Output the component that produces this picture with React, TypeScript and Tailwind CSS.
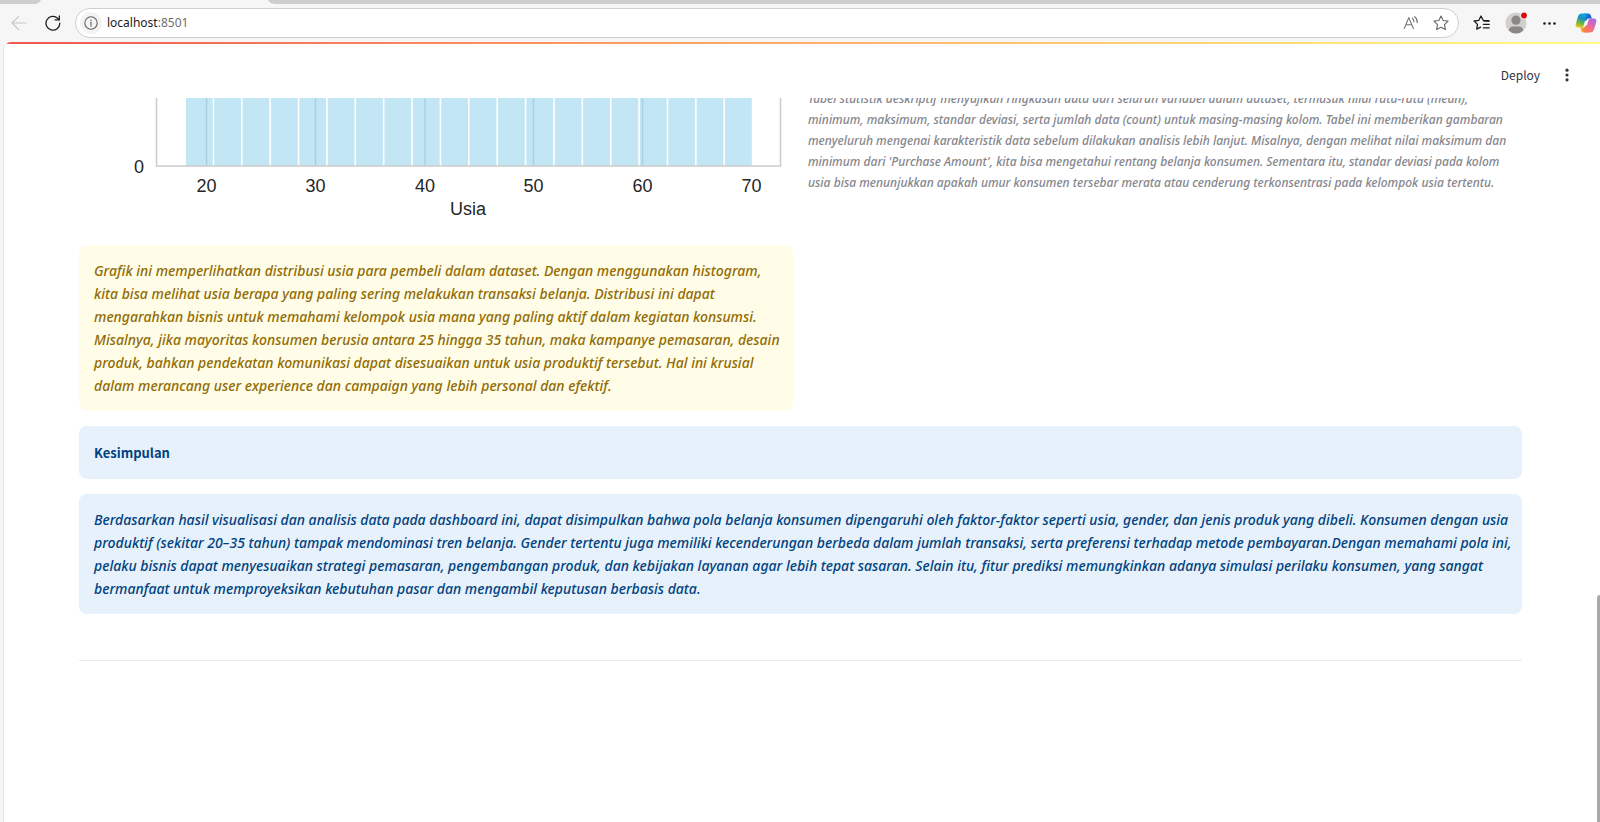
import React from "react";

const BIN_WIDTH = 28.38;
const BIN_COUNT = 20;
const BARS_LEFT = 106;

const ticks = [
  { label: "20", x: 127.5, grid: true },
  { label: "30", x: 236.5, grid: true },
  { label: "40", x: 346, grid: true },
  { label: "50", x: 454.5, grid: true },
  { label: "60", x: 563.5, grid: true },
  { label: "70", x: 672.5, grid: false },
];

function AgeHistogram() {
  return (
    <svg
      viewBox="0 0 714 147"
      className="block w-full"
      role="img"
      aria-label="Distribusi usia"
      fontFamily='"Liberation Sans", Arial, sans-serif'
      fontSize="18"
      fill="#262626"
    >
      {Array.from({ length: BIN_COUNT }, (_, i) => (
        <rect
          key={i}
          x={BARS_LEFT + i * BIN_WIDTH + (i === 0 ? 1 : 0.8)}
          y="0"
          width={BIN_WIDTH - 1.6}
          height="68"
          fill="#c3e6f4"
        />
      ))}
      {ticks.map((t) => (
        <g key={t.label}>
          {t.grid && <path d={`M${t.x} 0V68`} stroke="#a9cedd" strokeWidth="1.4" />}
          <text x={t.x} y="94" textAnchor="middle">
            {t.label}
          </text>
        </g>
      ))}
      <path d="M77.5 0V68H701.5V0" fill="none" stroke="#cccccc" strokeWidth="1.6" />
      <text x="60" y="75" textAnchor="middle">
        0
      </text>
      <text x="389" y="117" textAnchor="middle">
        Usia
      </text>
    </svg>
  );
}

function BackIcon() {
  return (
    <svg viewBox="0 0 16 16" className="size-4" fill="none" stroke="#c6c6c6" strokeWidth="1.1" strokeLinecap="round" strokeLinejoin="round">
      <path d="M15 8H1.2M7.6 1.4 1 8l6.6 6.6" />
    </svg>
  );
}

function ReloadIcon() {
  return (
    <svg viewBox="0 0 16 16" className="size-4" fill="none" stroke="#1f1f1f" strokeWidth="1.3" strokeLinecap="round" strokeLinejoin="round">
      <path d="M14.8 8.2A6.9 6.9 0 1 1 12.6 3.2L14.2 4.8" />
      <path d="M14.3 0.9V4.9H10.2" />
    </svg>
  );
}

function InfoIcon() {
  return (
    <svg viewBox="0 0 14 14" className="size-3.5" fill="none" stroke="#636363" strokeWidth="1.1">
      <circle cx="7" cy="7" r="6.2" />
      <path d="M7 6.2v4" strokeLinecap="round" />
      <circle cx="7" cy="4.2" r="0.7" fill="#636363" stroke="none" />
    </svg>
  );
}

function ReadAloudIcon() {
  return (
    <svg viewBox="0 0 16 16" className="size-4" fill="none" stroke="#707070" strokeWidth="1.1" strokeLinecap="round" strokeLinejoin="round">
      <path d="M1.2 13.6 5.8 2.6 10.4 13.6M2.8 9.8H8.8" />
      <path d="M9.4 3.2Q10.9 4.6 10.9 6.8M11.6 1.6Q14.4 3.8 14.2 7.6" />
    </svg>
  );
}

function StarIcon() {
  return (
    <svg viewBox="0 0 16 16" className="size-4" fill="none" stroke="#6a6a6a" strokeWidth="1.1" strokeLinejoin="round">
      <path d="M8 1 10.15 5.5 15.1 6.15 11.5 9.6 12.4 14.6 8 12.2 3.6 14.6 4.5 9.6 0.9 6.15 5.85 5.5Z" />
    </svg>
  );
}

function FavoritesIcon() {
  return (
    <svg viewBox="0 0 18 16" className="h-4 w-[18px]" fill="none" stroke="#1c1c1c" strokeWidth="1.3" strokeLinecap="round" strokeLinejoin="round">
      <path d="M15.6 5.6 10.2 5.3 8 1 5.85 5.3 1.1 6 4.5 9.4 3.7 14.2 7.6 12.2" />
      <path d="M11 6H16.2M10.4 9.4H16.2M10.4 12.8H16.2" />
    </svg>
  );
}

function AvatarIcon() {
  return (
    <svg viewBox="0 0 22 22" className="size-[22px]">
      <defs>
        <clipPath id="avatar-disc">
          <circle cx="11" cy="11" r="10.5" />
        </clipPath>
      </defs>
      <circle cx="11" cy="11" r="10.5" fill="#d2d0ce" />
      <g clipPath="url(#avatar-disc)" fill="#8a8886">
        <circle cx="11" cy="8.2" r="4.6" />
        <path d="M3.5 20.5C3.5 16 6 14.4 8 14.4H14C16 14.4 18.5 16 18.5 20.5V22H3.5Z" />
      </g>
      <circle cx="19" cy="3.5" r="3.6" fill="#f5f5f5" />
      <circle cx="19" cy="3.5" r="2.9" fill="#dc0a12" />
    </svg>
  );
}

function CopilotIcon() {
  return (
    <svg viewBox="0 0 22 20" className="h-5 w-[22px]">
      <defs>
        <linearGradient id="cp-left" x1="0.6" y1="0" x2="0.3" y2="1">
          <stop offset="0" stopColor="#12a5e6" />
          <stop offset="0.35" stopColor="#1b93b8" />
          <stop offset="0.65" stopColor="#6bb545" />
          <stop offset="1" stopColor="#f5c518" />
        </linearGradient>
        <linearGradient id="cp-right" x1="0.7" y1="0" x2="0.3" y2="1">
          <stop offset="0" stopColor="#a568e8" />
          <stop offset="0.5" stopColor="#e765a8" />
          <stop offset="1" stopColor="#ff7a5c" />
        </linearGradient>
        <linearGradient id="cp-top" x1="0" y1="0" x2="1" y2="1">
          <stop offset="0" stopColor="#1c8fe8" />
          <stop offset="1" stopColor="#1746b8" />
        </linearGradient>
        <linearGradient id="cp-bottom" x1="0" y1="0" x2="1" y2="0">
          <stop offset="0" stopColor="#fbb829" />
          <stop offset="1" stopColor="#f4603e" />
        </linearGradient>
      </defs>
      <path d="M9 0.6H13.4C15 0.6 15.6 1.6 16 3L16.8 5.6H14C12.4 5.6 11.8 6.4 11.4 7.6L9 8Z" fill="url(#cp-top)" />
      <path d="M13 19.4H8.6C7 19.4 6.4 18.4 6 17L5.2 14.4H8C9.6 14.4 10.2 13.6 10.6 12.4L13 12Z" fill="url(#cp-bottom)" />
      <path d="M7 0.6H11.6C10.6 1.2 11.2 3 11 4.4L8.7 12.2C8.2 13.8 7.4 14.6 6 14.6H3C1 14.6 0.2 13 0.8 11L3 3.6C3.6 1.6 4.8 0.6 7 0.6Z" fill="url(#cp-left)" />
      <path d="M15 19.4H10.4C11.4 18.8 10.8 17 11 15.6L13.3 7.8C13.8 6.2 14.6 5.4 16 5.4H19C21 5.4 21.8 7 21.2 9L19 16.4C18.4 18.4 17.2 19.4 15 19.4Z" fill="url(#cp-right)" />
    </svg>
  );
}

function BrowserBar() {
  return (
    <div className="bg-[#f6f6f6] font-['Noto_Sans',sans-serif]">
      <div className="flex h-1 bg-[#cecece]">
        <svg viewBox="0 0 242 4" className="ml-[34px] h-1 w-[242px]">
          <path d="M0 4Q5 4 7 0H234Q236 4 242 4Z" fill="#f6f6f6" />
        </svg>
      </div>
      <div className="flex h-[38px] items-center pr-[3px] pl-[11px]">
        <button type="button" aria-label="Kembali" disabled>
          <BackIcon />
        </button>
        <button type="button" aria-label="Muat ulang" className="ml-[18px]">
          <ReloadIcon />
        </button>
        <div className="ml-3.5 flex h-[30px] min-w-0 grow items-center rounded-full border border-[#cfcfcf] bg-white pr-[9px] pl-1">
          <button type="button" aria-label="Info situs" className="grid size-[22px] place-items-center rounded-full bg-[#f3f3f3]">
            <InfoIcon />
          </button>
          <a href="http://localhost:8501" className="ml-[5px] grow text-xs text-[#1b1b1b]">
            localhost<span className="text-[#707070]">:8501</span>
          </a>
          <button type="button" aria-label="Baca dengan suara">
            <ReadAloudIcon />
          </button>
          <button type="button" aria-label="Tambahkan ke favorit" className="ml-3.5">
            <StarIcon />
          </button>
        </div>
        <div className="ml-3.5 flex items-center gap-3.5">
          <button type="button" aria-label="Favorit">
            <FavoritesIcon />
          </button>
          <button type="button" aria-label="Profil">
            <AvatarIcon />
          </button>
          <button type="button" aria-label="Menu lainnya">
            <svg viewBox="0 0 20 20" className="size-5" fill="#1c1c1c">
              <circle cx="3.5" cy="10.5" r="1.3" />
              <circle cx="8.5" cy="10.5" r="1.3" />
              <circle cx="13.5" cy="10.5" r="1.3" />
            </svg>
          </button>
          <button type="button" aria-label="Copilot">
            <CopilotIcon />
          </button>
        </div>
      </div>
    </div>
  );
}

function Alert({ tone, children }: { tone: "warning" | "info"; children: React.ReactNode }) {
  const colors = tone === "warning" ? "bg-[#fffde7] text-[#926c05]" : "bg-[#e7f1fb] text-[#004280]";
  return (
    <div role="note" className={`rounded-lg px-[15px] py-3.5 text-sm leading-[23px] font-medium italic lg:whitespace-nowrap ${colors}`}>
      {children}
    </div>
  );
}

export default function App() {
  return (
    <div className="flex min-h-screen flex-col bg-[#f6f6f6]">
      <BrowserBar />
      <div className="ml-[3px] flex grow flex-col overflow-hidden rounded-tl-lg border-l border-[#e4e4e4] bg-white font-['Noto_Sans',sans-serif]">
        <div className="h-0.5 bg-linear-to-r from-[#f05552] to-[#fffd80]" />
        <div className="flex grow">
          <div className="flex min-w-0 grow flex-col">
            <header className="flex h-[54px] items-center justify-end gap-5 pt-2 pr-[23px] font-['Noto_Sans_CJK_SC',sans-serif]">
              <button type="button" className="text-xs text-[#31333f]">
                Deploy
              </button>
              <button type="button" aria-label="Menu utama">
                <svg viewBox="0 0 14 14" className="size-3.5" fill="#31333f">
                  <circle cx="7" cy="2.2" r="1.6" />
                  <circle cx="7" cy="7" r="1.6" />
                  <circle cx="7" cy="11.8" r="1.6" />
                </svg>
              </button>
            </header>
            <main className="flex flex-col gap-[15px] overflow-hidden px-[75px]">
              <div className="grid grid-cols-2 items-start gap-[15px]">
                <div>
                  <AgeHistogram />
                  <Alert tone="warning">
                    Grafik ini memperlihatkan distribusi usia para pembeli dalam dataset. Dengan menggunakan histogram,
                    <br /> kita bisa melihat usia berapa yang paling sering melakukan transaksi belanja. Distribusi ini dapat
                    <br /> mengarahkan bisnis untuk memahami kelompok usia mana yang paling aktif dalam kegiatan konsumsi.
                    <br /> Misalnya, jika mayoritas konsumen berusia antara 25 hingga 35 tahun, maka kampanye pemasaran, desain
                    <br /> produk, bahkan pendekatan komunikasi dapat disesuaikan untuk usia produktif tersebut. Hal ini krusial
                    <br /> dalam merancang user experience dan campaign yang lebih personal dan efektif.
                  </Alert>
                </div>
                <p className="-mt-2.5 text-xs leading-[21px] font-medium text-[#85868d] italic lg:whitespace-nowrap">
                  Tabel statistik deskriptif menyajikan ringkasan data dari seluruh variabel dalam dataset, termasuk nilai rata-rata (mean),
                  <br /> minimum, maksimum, standar deviasi, serta jumlah data (count) untuk masing-masing kolom. Tabel ini memberikan gambaran
                  <br /> menyeluruh mengenai karakteristik data sebelum dilakukan analisis lebih lanjut. Misalnya, dengan melihat nilai maksimum dan
                  <br /> minimum dari 'Purchase Amount', kita bisa mengetahui rentang belanja konsumen. Sementara itu, standar deviasi pada kolom
                  <br /> usia bisa menunjukkan apakah umur konsumen tersebar merata atau cenderung terkonsentrasi pada kelompok usia tertentu.
                </p>
              </div>
              <div className="rounded-lg bg-[#e7f1fb] px-[15px] py-[15px]">
                <h2 className="font-['Noto_Sans_CJK_SC',sans-serif] text-[13px] leading-[23px] font-semibold text-[#004280]">Kesimpulan</h2>
              </div>
              <Alert tone="info">
                Berdasarkan hasil visualisasi dan analisis data pada dashboard ini, dapat disimpulkan bahwa pola belanja konsumen dipengaruhi oleh faktor-faktor seperti usia, gender, dan jenis produk yang dibeli. Konsumen dengan usia
                <br /> produktif (sekitar 20–35 tahun) tampak mendominasi tren belanja. Gender tertentu juga memiliki kecenderungan berbeda dalam jumlah transaksi, serta preferensi terhadap metode pembayaran.Dengan memahami pola ini,
                <br /> pelaku bisnis dapat menyesuaikan strategi pemasaran, pengembangan produk, dan kebijakan layanan agar lebih tepat sasaran. Selain itu, fitur prediksi memungkinkan adanya simulasi perilaku konsumen, yang sangat
                <br /> bermanfaat untuk memproyeksikan kebutuhan pasar dan mengambil keputusan berbasis data.
              </Alert>
              <hr className="mt-[31px] border-[#e9eaec]" />
            </main>
          </div>
          <div className="flex w-[3px] flex-col justify-end">
            <div className="h-[227px] rounded-tl bg-[#a9a9ac]" />
          </div>
        </div>
      </div>
    </div>
  );
}
